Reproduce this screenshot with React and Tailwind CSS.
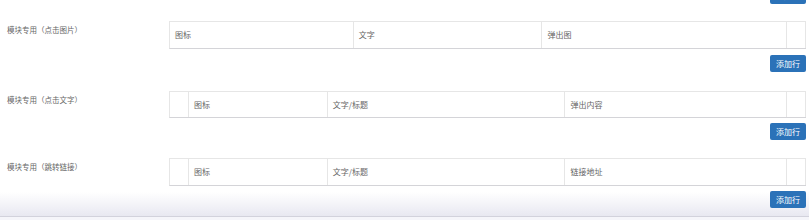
import React from "react";

const sections = [
  {
    label: "模块专用（点击图片）",
    top: "",
    h: "h-[28px]",
    gap: "mt-[6px]",
    cols: [
      { w: 184, t: "图标" },
      { w: 189, t: "文字" },
      { w: 245, t: "弹出图" },
      { w: 19, t: "" },
    ],
  },
  {
    label: "模块专用（点击文字）",
    top: "mt-[19px]",
    h: "h-[27px]",
    gap: "mt-[5px]",
    cols: [
      { w: 19, t: "" },
      { w: 139, t: "图标" },
      { w: 238, t: "文字/标题" },
      { w: 222, t: "弹出内容" },
      { w: 19, t: "" },
    ],
  },
  {
    label: "模块专用（跳转链接）",
    top: "mt-[18px]",
    h: "h-[28px]",
    gap: "mt-[5px]",
    cols: [
      { w: 19, t: "" },
      { w: 139, t: "图标" },
      { w: 238, t: "文字/标题" },
      { w: 222, t: "链接地址" },
      { w: 19, t: "" },
    ],
  },
];

function AddButton({ className = "" }) {
  return (
    <div className={"flex justify-end pr-[3px] " + className}>
      <button className="h-[17px] w-[36px] rounded-[2px] bg-[#2b72b8] text-[8px] leading-[17px] text-white">
        添加行
      </button>
    </div>
  );
}

export default function App() {
  return (
    <div
      className="flex h-[220px] w-[809px] flex-col overflow-hidden bg-white"
      style={{ fontFamily: '"Noto Sans CJK SC", "Noto Sans", sans-serif' }}
    >
      <div className="relative h-[216px] bg-[linear-gradient(to_bottom,#ffffff_192px,#e8e8f1_216px)]">
        <AddButton className="-mt-[13px]" />
        <div className="mt-[17px] flex flex-col">
          {sections.map((s, i) => (
            <div key={i} className={s.top}>
              <div className="flex">
                <div className="w-[169px] pl-[7px] pt-[4px] text-[7.5px] leading-[10px] text-[#666]">
                  {s.label}
                </div>
                <div
                  className={
                    "flex w-[637px] border-t border-b border-l border-t-[#e6e6e6] border-b-[#d4d4d8] border-l-[#e6e6e6] " +
                    s.h
                  }
                >
                  {s.cols.map((c, j) => (
                    <div
                      key={j}
                      style={{ width: c.w }}
                      className="flex items-center border-r border-[#e6e6e6] pl-[5px] text-[8px] text-[#666]"
                    >
                      {c.t}
                    </div>
                  ))}
                </div>
              </div>
              <AddButton className={s.gap} />
            </div>
          ))}
        </div>
      </div>
      <div className="h-[4px] border-t border-[#d2d2dc] bg-[#f5f5fa]" />
    </div>
  );
}
